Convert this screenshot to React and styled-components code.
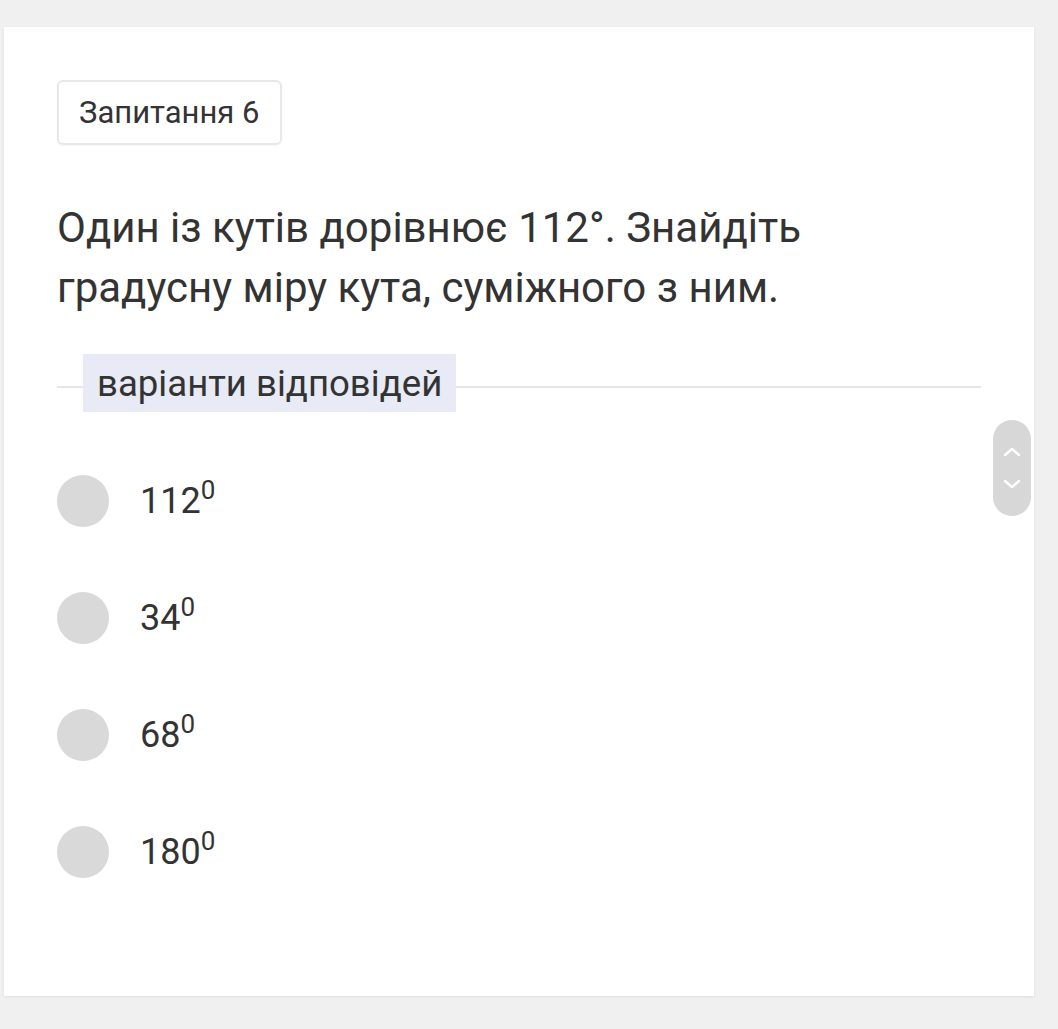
import styled, { createGlobalStyle } from 'styled-components';

const GlobalStyle = createGlobalStyle`
  html, body {
    margin: 0;
    padding: 0;
    background: #f0f0f0;
  }
  body {
    font-family: Roboto, 'Noto Sans', sans-serif;
    color: #333;
  }
`;

const Page = styled.div`
  padding: 27px 24px 33px 4px;
`;

const Card = styled.section`
  position: relative;
  background: #fff;
  box-shadow: 0 1px 3px rgba(0, 0, 0, 0.08);
  padding: 53px 53px 0 53px;
  height: 969px;
  box-sizing: border-box;
`;

const QuestionTag = styled.div`
  display: inline-flex;
  align-items: center;
  height: 65px;
  box-sizing: border-box;
  padding: 0 21px 0 20px;
  border: 2px solid #e8e8e8;
  border-radius: 6px;
  box-shadow: 0 1px 2px rgba(0, 0, 0, 0.05);
  font-size: 31px;
  color: #333;
`;

const QuestionText = styled.p`
  margin: 53px 0 0;
  max-width: 860px;
  font-size: 42px;
  line-height: 60px;
  color: #333;
`;

const Divider = styled.div`
  display: flex;
  align-items: center;
  margin-top: 36px;
  &::before,
  &::after {
    content: '';
    height: 2px;
    background: #e6e6e6;
    margin-top: 8px;
  }
  &::before {
    width: 26px;
  }
  &::after {
    flex: 1;
  }
`;

const DividerLabel = styled.span`
  background: #e8eaf6;
  height: 58px;
  display: flex;
  align-items: center;
  padding: 0 14px;
  font-size: 36.6px;
  color: #333;
`;

const Options = styled.ul`
  list-style: none;
  margin: 63px 0 0;
  padding: 0;
  display: flex;
  flex-direction: column;
  gap: 65px;
`;

const Option = styled.li`
  display: flex;
  align-items: center;
  gap: 31px;
  height: 52px;
`;

const Radio = styled.span`
  width: 52px;
  height: 52px;
  border-radius: 50%;
  background: #d9d9d9;
  flex-shrink: 0;
`;

const OptionLabel = styled.span`
  font-size: 36px;
  color: #333;
  sup {
    font-size: 26px;
    vertical-align: 0;
    position: relative;
    top: -14px;
  }
`;

const Scroller = styled.div`
  position: absolute;
  right: 3px;
  top: 393px;
  width: 38px;
  height: 96px;
  border-radius: 19px;
  background: #d7d7d7;
  display: flex;
  flex-direction: column;
  align-items: center;
  justify-content: center;
  gap: 22px;
`;

const Chevron = ({ down }) => (
  <svg width="18" height="10" viewBox="0 0 18 10">
    <path
      d={down ? 'M2 2 L9 8 L16 2' : 'M2 8 L9 2 L16 8'}
      fill="none"
      stroke="#fff"
      strokeWidth="2.4"
      strokeLinecap="round"
      strokeLinejoin="round"
    />
  </svg>
);

const answers = ['112', '34', '68', '180'];

export default function App() {
  return (
    <Page>
      <GlobalStyle />
      <Card>
        <QuestionTag>Запитання 6</QuestionTag>
        <QuestionText>
          Один із кутів дорівнює 112°. Знайдіть градусну міру кута, суміжного з ним.
        </QuestionText>
        <Divider>
          <DividerLabel>варіанти відповідей</DividerLabel>
        </Divider>
        <Options>
          {answers.map((a) => (
            <Option key={a}>
              <Radio />
              <OptionLabel>
                {a}
                <sup>0</sup>
              </OptionLabel>
            </Option>
          ))}
        </Options>
        <Scroller>
          <Chevron />
          <Chevron down />
        </Scroller>
      </Card>
    </Page>
  );
}
